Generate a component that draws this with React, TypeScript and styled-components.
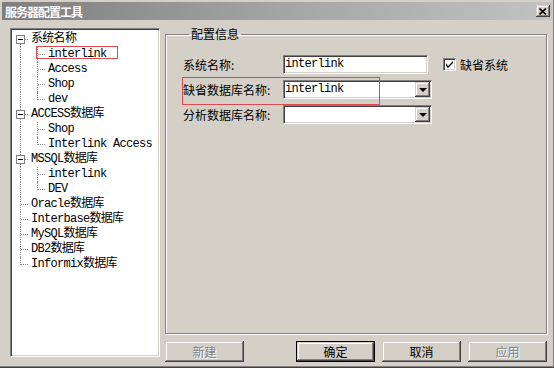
import React from "react";
import styled, { createGlobalStyle, css } from "styled-components";

const GlobalStyle = createGlobalStyle`
  html, body {
    margin: 0;
    padding: 0;
    background: #d4d0c8;
  }
  body {
    width: 554px;
    height: 368px;
    overflow: hidden;
    font-family: "Noto Sans CJK SC", sans-serif;
    font-size: 12px;
    color: #000;
  }
  * {
    box-sizing: border-box;
  }
`;

const mono = `"Liberation Mono", "Noto Sans CJK SC", monospace`;

// win2k 3d borders
const sunken = css`
  border: 1px solid;
  border-color: #808080 #ffffff #ffffff #808080;
  box-shadow: inset 1px 1px #404040, inset -1px -1px #d4d0c8;
`;

const raised = css`
  background: #d4d0c8;
  box-shadow: inset -1px -1px #404040, inset 1px 1px #d4d0c8,
    inset -2px -2px #808080, inset 2px 2px #ffffff;
`;

type Kind = "first" | "tee" | "end" | "pass" | "none";

interface TreeNode {
  label: string;
  children?: string[];
}

interface Row {
  guides: Kind[];
  expander: boolean;
  label: string;
}

const tree: TreeNode[] = [
  { label: "系统名称", children: ["interlink", "Access", "Shop", "dev"] },
  { label: "ACCESS数据库", children: ["Shop", "Interlink Access"] },
  { label: "MSSQL数据库", children: ["interlink", "DEV"] },
  { label: "Oracle数据库" },
  { label: "Interbase数据库" },
  { label: "MySQL数据库" },
  { label: "DB2数据库" },
  { label: "Informix数据库" },
];

const rows: Row[] = [];
tree.forEach((node, i) => {
  const last = i === tree.length - 1;
  const kind: Kind = i === 0 ? "first" : last ? "end" : "tee";
  rows.push({ guides: [kind], expander: !!node.children, label: node.label });
  node.children?.forEach((c, j) => {
    rows.push({
      guides: [last ? "none" : "pass", j === node.children!.length - 1 ? "end" : "tee"],
      expander: false,
      label: c,
    });
  });
});

const Window = styled.div`
  position: relative;
  width: 554px;
  height: 368px;
  display: flex;
  flex-direction: column;
  background: #d4d0c8;
  border-right: 1px solid #808080;
  border-bottom: 1px solid #404040;
  box-shadow: inset 0 -1px #808080;
`;

const TitleBar = styled.div`
  height: 18px;
  margin: 2px 1px 0 2px;
  padding: 0 2px 0 3px;
  display: flex;
  align-items: center;
  justify-content: space-between;
  background: linear-gradient(90deg, #7e7e7e 0%, #a4a4a4 50%, #c2c2c2 100%);
`;

const TitleText = styled.span`
  color: #ffffff;
  font-weight: bold;
  font-size: 12px;
  letter-spacing: -1px;
`;

const CloseButton = styled.div`
  ${raised};
  width: 14px;
  height: 12px;
  display: flex;
  align-items: center;
  justify-content: center;
`;

const Body = styled.div`
  flex: 1;
  display: flex;
  gap: 5px;
  padding: 8px 0 0 10px;
`;

const TreePanel = styled.div`
  ${sunken};
  position: relative;
  width: 150px;
  height: 329px;
  padding: 3px 1px 1px;
  background: #ffffff;
  font-family: ${mono};
  font-size: 12px;
  letter-spacing: -0.7px;
`;

const TreeRow = styled.div`
  display: flex;
  align-items: center;
  height: 15px;
  line-height: 15px;
  white-space: nowrap;
`;

const Guide = styled.span<{ $kind: Kind }>`
  position: relative;
  flex: none;
  width: 17px;
  height: 15px;
  &::before {
    content: "";
    display: ${(p) => (p.$kind === "none" ? "none" : "block")};
    position: absolute;
    left: 8px;
    top: ${(p) => (p.$kind === "first" ? "7px" : "0")};
    height: ${(p) => (p.$kind === "end" ? "8px" : "auto")};
    bottom: ${(p) => (p.$kind === "end" ? "auto" : "0")};
    border-left: 1px dotted #8c8c8c;
  }
  &::after {
    content: "";
    display: ${(p) => (p.$kind === "pass" || p.$kind === "none" ? "none" : "block")};
    position: absolute;
    left: 9px;
    top: 7px;
    width: 7px;
    border-top: 1px dotted #8c8c8c;
  }
`;

const Expander = styled.span`
  position: absolute;
  z-index: 1;
  left: 4px;
  top: 3px;
  width: 9px;
  height: 9px;
  border: 1px solid #808080;
  background: #ffffff;
  &::after {
    content: "";
    position: absolute;
    left: 1px;
    top: 3px;
    width: 5px;
    height: 1px;
    background: #000000;
  }
`;

const NodeLabel = styled.span`
  padding-left: 2px;
`;

const Mark = styled.div<{ $left: number; $top: number; $width: number; $height: number }>`
  position: absolute;
  left: ${(p) => p.$left}px;
  top: ${(p) => p.$top}px;
  width: ${(p) => p.$width}px;
  height: ${(p) => p.$height}px;
  border: 1px solid #dc4a4e;
  pointer-events: none;
  z-index: 2;
`;

const RightColumn = styled.div`
  width: 382px;
  display: flex;
  flex-direction: column;
`;

const GroupBox = styled.fieldset`
  margin: 0;
  height: 306px;
  padding: 15px 0 0 17px;
  border: 1px solid #808080;
  box-shadow: inset 1px 1px #ffffff, 1px 1px #ffffff;
  display: flex;
  flex-direction: column;
  gap: 6px;
`;

const Legend = styled.legend`
  margin-left: 6px;
  padding: 0 2px;
  font-size: 12px;
  line-height: 12px;
`;

const FieldRow = styled.div`
  display: flex;
  align-items: center;
  height: 19px;
`;

const FieldLabel = styled.span`
  width: 100px;
  flex: none;
  font-size: 12px;
`;

const TextBox = styled.div<{ $width: number }>`
  ${sunken};
  position: relative;
  width: ${(p) => p.$width}px;
  height: 19px;
  padding: 0 0 0 1px;
  background: #ffffff;
  font-family: ${mono};
  font-size: 12px;
  letter-spacing: -0.7px;
  line-height: 17px;
  display: flex;
  align-items: center;
`;

const DropButton = styled.span`
  ${raised};
  position: absolute;
  right: 1px;
  top: 1px;
  width: 15px;
  height: 15px;
  display: flex;
  align-items: center;
  justify-content: center;
  &::after {
    content: "";
    border-left: 4px solid transparent;
    border-right: 4px solid transparent;
    border-top: 4px solid #000000;
    margin-top: 1px;
  }
`;

const CheckGroup = styled.label`
  display: flex;
  align-items: center;
  gap: 4px;
  margin-left: 15px;
  font-size: 12px;
`;

const CheckBox = styled.span`
  ${sunken};
  width: 13px;
  height: 13px;
  background: #ffffff;
  display: flex;
  align-items: center;
  justify-content: center;
`;

const ButtonRow = styled.div`
  display: flex;
  align-items: center;
  justify-content: space-between;
  margin-top: 7px;
`;

const ButtonGroup = styled.div`
  display: flex;
  gap: 7px;
`;

const Button = styled.button<{ $default?: boolean }>`
  ${raised};
  width: 79px;
  height: 21px;
  padding: 0;
  border: ${(p) => (p.$default ? "1px solid #000000" : "none")};
  font-family: "Noto Sans CJK SC", sans-serif;
  font-size: 12px;
  color: #000000;
  &:disabled {
    color: #808080;
    text-shadow: 1px 1px #ffffff;
  }
`;

const App: React.FC = () => {
  return (
    <>
      <GlobalStyle />
      <Window>
        <TitleBar>
          <TitleText>服务器配置工具</TitleText>
          <CloseButton>
            <svg width="8" height="7" viewBox="0 0 8 7">
              <path d="M0.5 0.5 L7 6.5 M7 0.5 L0.5 6.5" stroke="#000" strokeWidth="1.6" />
            </svg>
          </CloseButton>
        </TitleBar>
        <Body>
          <TreePanel>
            {rows.map((row, i) => (
              <TreeRow key={i}>
                {row.guides.map((g, k) => (
                  <Guide key={k} $kind={g}>
                    {row.expander && k === 0 && <Expander />}
                  </Guide>
                ))}
                <NodeLabel>{row.label}</NodeLabel>
              </TreeRow>
            ))}
            <Mark $left={25} $top={17} $width={82} $height={13} />
          </TreePanel>
          <RightColumn>
            <GroupBox>
              <Legend>配置信息</Legend>
              <FieldRow>
                <FieldLabel>系统名称:</FieldLabel>
                <TextBox $width={145}>interlink</TextBox>
                <CheckGroup>
                  <CheckBox>
                    <svg width="7" height="7" viewBox="0 0 7 7">
                      <path d="M0 2 L0 5 L2 7 L7 2 L7 0 L2 5 Z" fill="#000" />
                    </svg>
                  </CheckBox>
                  缺省系统
                </CheckGroup>
              </FieldRow>
              <FieldRow>
                <FieldLabel>缺省数据库名称:</FieldLabel>
                <TextBox $width={149}>
                  interlink
                  <DropButton />
                </TextBox>
              </FieldRow>
              <FieldRow>
                <FieldLabel>分析数据库名称:</FieldLabel>
                <TextBox $width={149}>
                  <DropButton />
                </TextBox>
              </FieldRow>
            </GroupBox>
            <ButtonRow>
              <Button disabled>新建</Button>
              <ButtonGroup>
                <Button $default>确定</Button>
                <Button>取消</Button>
                <Button disabled>应用</Button>
              </ButtonGroup>
            </ButtonRow>
          </RightColumn>
        </Body>
        <Mark $left={182} $top={77} $width={198} $height={28} />
      </Window>
    </>
  );
};

export default App;
